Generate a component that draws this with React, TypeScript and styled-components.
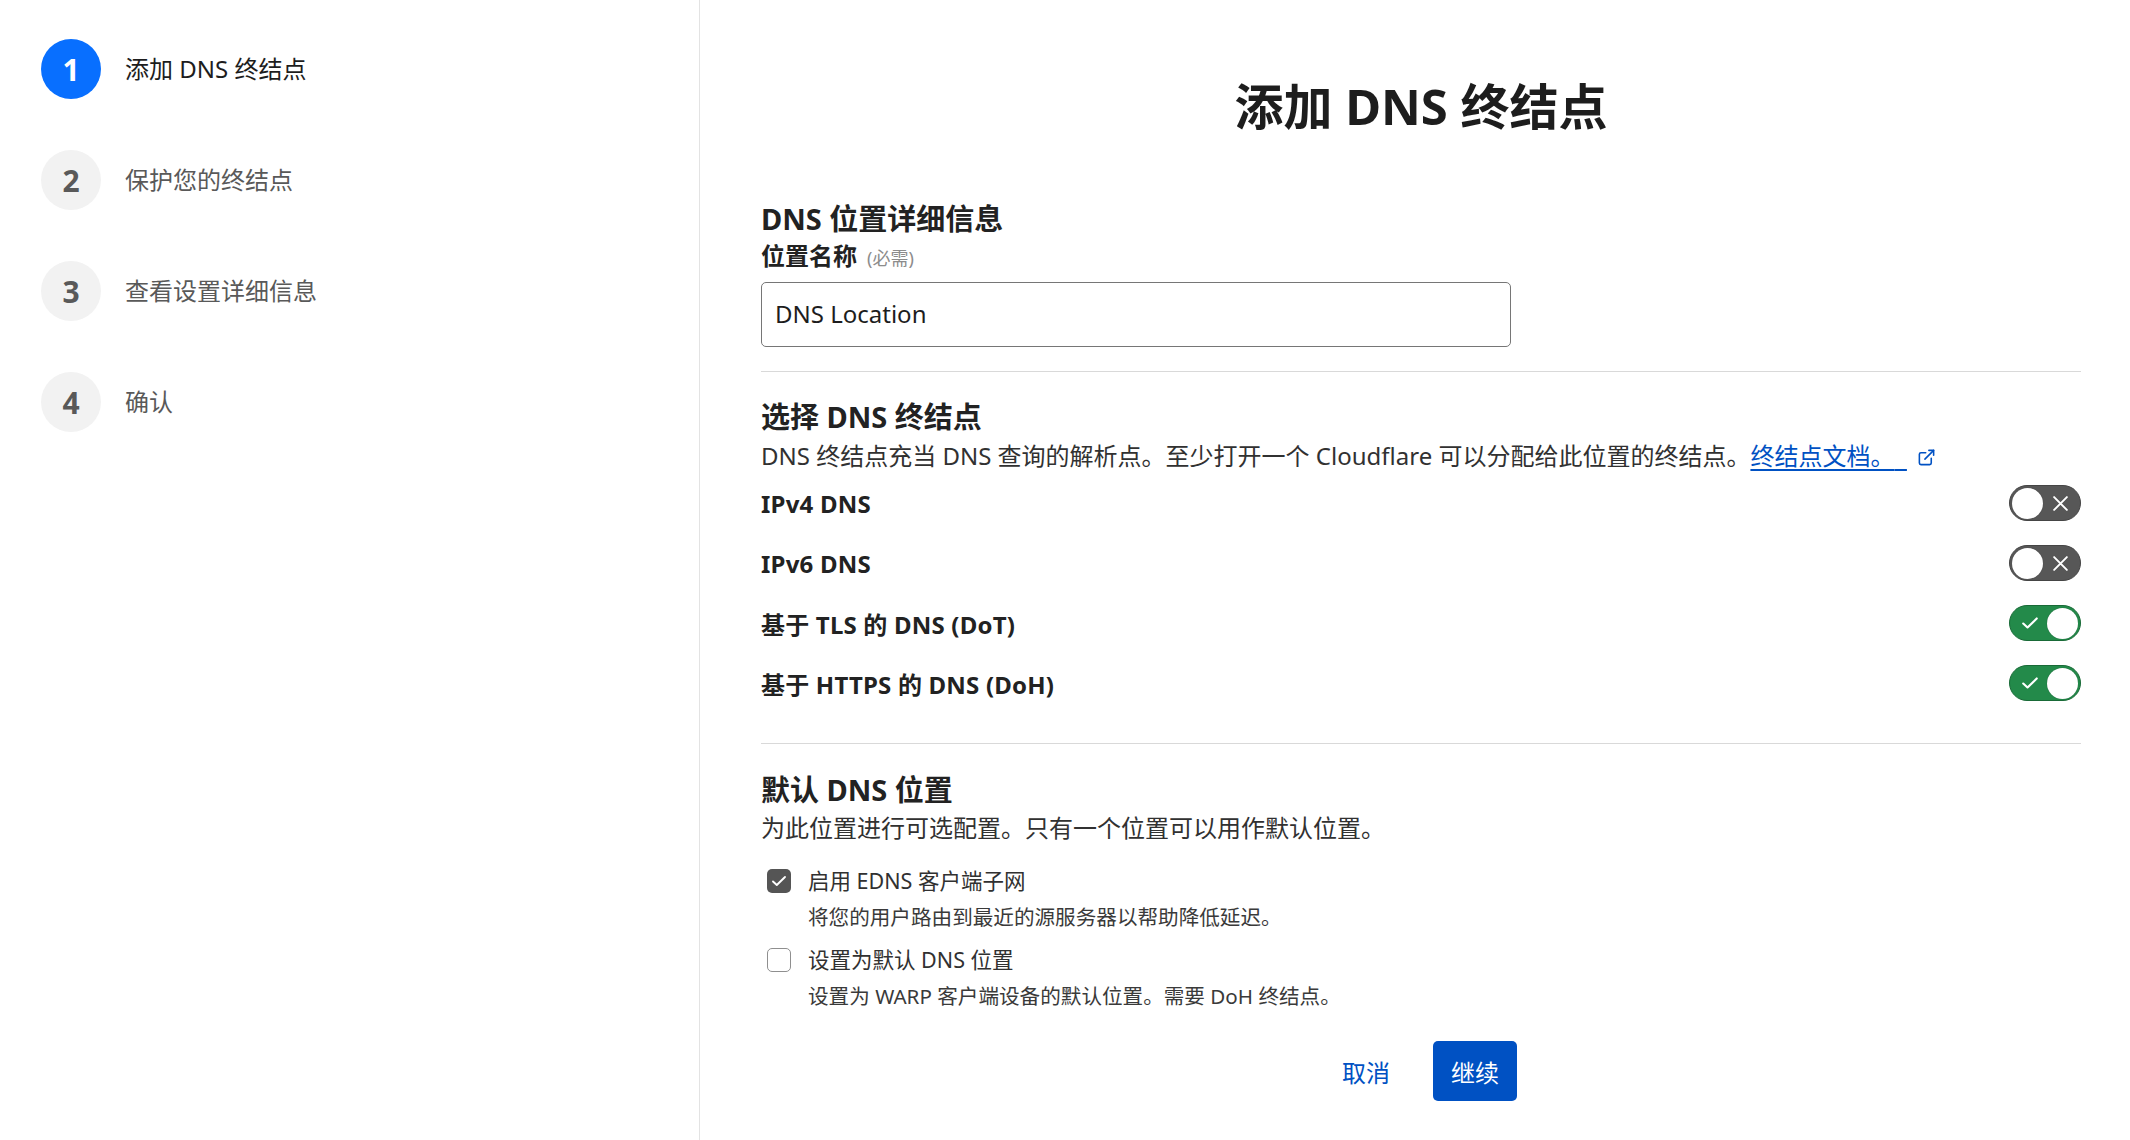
import React from "react";
import styled, { createGlobalStyle } from "styled-components";

const GlobalStyle = createGlobalStyle`
  html, body {
    margin: 0;
    padding: 0;
    background: #ffffff;
  }
  body {
    font-family: "Noto Sans", "Noto Sans CJK SC", sans-serif;
    color: #222222;
  }
  * { box-sizing: border-box; }
`;

const Page = styled.div`
  display: grid;
  grid-template-columns: 700px 1fr;
  height: 1140px;
  overflow: hidden;
`;

const Sidebar = styled.aside`
  border-right: 1px solid #e3e3e3;
  padding: 39px 0 0 41px;
  display: flex;
  flex-direction: column;
  gap: 51px;
`;

const Step = styled.div`
  display: flex;
  align-items: center;
  gap: 24px;
`;

const StepCircle = styled.div<{ $active?: boolean }>`
  width: 60px;
  height: 60px;
  border-radius: 50%;
  display: flex;
  align-items: center;
  justify-content: center;
  font-size: 30px;
  font-weight: 700;
  background: ${(p) => (p.$active ? "#086fff" : "#f2f2f2")};
  color: ${(p) => (p.$active ? "#ffffff" : "#595959")};
`;

const StepLabel = styled.span<{ $active?: boolean }>`
  font-size: 24px;
  padding-bottom: 4px;
  color: ${(p) => (p.$active ? "#1d1d1d" : "#595959")};
`;

const Main = styled.main`
  padding: 77px 49px 0 61px;
  display: flex;
  flex-direction: column;
`;

const Title = styled.h1`
  margin: 0;
  font-size: 49px;
  line-height: 58px;
  font-weight: 700;
  text-align: center;
  color: #1d1d1d;
`;

const SectionHeading = styled.h2<{ $top: number }>`
  margin: ${(p) => p.$top}px 0 0;
  font-size: 29px;
  line-height: 36px;
  font-weight: 700;
  color: #222222;
`;

const FieldLabel = styled.label`
  margin-top: 4px;
  display: flex;
  align-items: baseline;
  gap: 10px;
  font-size: 24px;
  line-height: 30px;
  font-weight: 700;
  color: #222222;
`;

const Required = styled.span`
  font-size: 18px;
  font-weight: 400;
  color: #8c8c8c;
`;

const TextInput = styled.input`
  margin-top: 9px;
  width: 750px;
  height: 65px;
  border: 1px solid #767676;
  border-radius: 5px;
  padding: 0 13px 2px;
  font-family: inherit;
  font-size: 24px;
  color: #1d1d1d;
  outline: none;
`;

const Divider = styled.hr<{ $top: number }>`
  margin: ${(p) => p.$top}px 0 0;
  border: 0;
  border-top: 1px solid #d9d9d9;
  height: 0;
`;

const Description = styled.p<{ $top: number }>`
  margin: ${(p) => p.$top}px 0 0;
  font-size: 24px;
  line-height: 34px;
  color: #313131;
`;

const DocLink = styled.a`
  color: #0051c3;
  text-decoration: underline;
  text-underline-offset: 4px;
`;

const LinkIcon = styled.svg`
  width: 19px;
  height: 19px;
  margin-left: 10px;
  vertical-align: -2px;
  stroke: #0051c3;
`;

const ToggleList = styled.div`
  display: flex;
  flex-direction: column;
`;

const ToggleRow = styled.div`
  height: 60px;
  display: flex;
  align-items: center;
  justify-content: space-between;
`;

const ToggleLabel = styled.span`
  font-size: 24px;
  font-weight: 700;
  letter-spacing: 0.2px;
  color: #222222;
`;

const Switch = styled.button<{ $on: boolean }>`
  width: 72px;
  height: 36px;
  border-radius: 18px;
  padding: 2px;
  display: flex;
  flex-direction: ${(p) => (p.$on ? "row-reverse" : "row")};
  align-items: center;
  cursor: pointer;
  background: ${(p) => (p.$on ? "#238a4a" : "#575757")};
  border: 1px solid ${(p) => (p.$on ? "#196a37" : "#454545")};
`;

const Knob = styled.span`
  width: 31px;
  height: 31px;
  border-radius: 50%;
  background: #ffffff;
  box-shadow: 0 0 1px rgba(0, 0, 0, 0.35);
  flex: none;
`;

const SwitchIcon = styled.span`
  flex: 1;
  display: flex;
  align-items: center;
  justify-content: center;
`;

const CheckList = styled.div`
  margin-top: 20px;
  display: flex;
  flex-direction: column;
  gap: 12px;
`;

const CheckItem = styled.div`
  display: grid;
  grid-template-columns: 24px 1fr;
  column-gap: 17px;
  row-gap: 5px;
  padding-left: 6px;
  align-items: center;
`;

const CheckBox = styled.span<{ $checked: boolean }>`
  width: 24px;
  height: 24px;
  border-radius: 5px;
  display: flex;
  align-items: center;
  justify-content: center;
  background: ${(p) => (p.$checked ? "#555555" : "#ffffff")};
  border: ${(p) => (p.$checked ? "none" : "1.5px solid #8f8f8f")};
`;

const CheckLabel = styled.span`
  font-size: 21.5px;
  line-height: 32px;
  color: #313131;
`;

const CheckHint = styled.span`
  grid-column: 2;
  font-size: 20.6px;
  line-height: 30px;
  color: #3a3a3a;
`;

const Footer = styled.div`
  margin-top: 30px;
  width: 756px;
  display: flex;
  justify-content: flex-end;
  gap: 25px;
`;

const Button = styled.button<{ $primary?: boolean }>`
  height: 60px;
  padding: 0 18px;
  border-radius: 5px;
  border: none;
  font-family: inherit;
  font-size: 24px;
  cursor: pointer;
  background: ${(p) => (p.$primary ? "#0051c3" : "transparent")};
  color: ${(p) => (p.$primary ? "#ffffff" : "#0051c3")};
`;

const steps = ["添加 DNS 终结点", "保护您的终结点", "查看设置详细信息", "确认"];

const endpoints = [
  { label: "IPv4 DNS", on: false },
  { label: "IPv6 DNS", on: false },
  { label: "基于 TLS 的 DNS (DoT)", on: true },
  { label: "基于 HTTPS 的 DNS (DoH)", on: true },
];

const XIcon = () => (
  <svg width="17" height="17" viewBox="0 0 16 16" fill="none" stroke="#ffffff" strokeWidth="1.8" strokeLinecap="round">
    <path d="M2 2l12 12M14 2L2 14" />
  </svg>
);

const CheckIcon = ({ size = 18 }: { size?: number }) => (
  <svg width={size} height={size} viewBox="0 0 16 16" fill="none" stroke="#ffffff" strokeWidth="1.9" strokeLinecap="round" strokeLinejoin="round">
    <path d="M2 8.5l3.8 3.5L14 4" />
  </svg>
);

export default function App() {
  return (
    <>
      <GlobalStyle />
      <Page>
        <Sidebar>
          {steps.map((s, i) => (
            <Step key={s}>
              <StepCircle $active={i === 0}>{i + 1}</StepCircle>
              <StepLabel $active={i === 0}>{s}</StepLabel>
            </Step>
          ))}
        </Sidebar>
        <Main>
          <Title>添加 DNS 终结点</Title>

          <SectionHeading $top={66}>DNS 位置详细信息</SectionHeading>
          <FieldLabel>
            位置名称<Required>(必需)</Required>
          </FieldLabel>
          <TextInput defaultValue="DNS Location" />

          <Divider $top={24} />

          <SectionHeading $top={27}>选择 DNS 终结点</SectionHeading>
          <Description $top={4}>
            DNS 终结点充当 DNS 查询的解析点。至少打开一个 Cloudflare 可以分配给此位置的终结点。
            <DocLink href="#">终结点文档。{"\u00a0\u00a0"}</DocLink>
            <LinkIcon viewBox="0 0 24 24" fill="none" strokeWidth="2" strokeLinecap="round" strokeLinejoin="round">
              <path d="M15 3h6v6" />
              <path d="M10 14 21 3" />
              <path d="M18 13v6a2 2 0 0 1-2 2H5a2 2 0 0 1-2-2V8a2 2 0 0 1 2-2h6" />
            </LinkIcon>
          </Description>

          <ToggleList>
            {endpoints.map((e) => (
              <ToggleRow key={e.label}>
                <ToggleLabel>{e.label}</ToggleLabel>
                <Switch $on={e.on} aria-pressed={e.on}>
                  <Knob />
                  <SwitchIcon>{e.on ? <CheckIcon /> : <XIcon />}</SwitchIcon>
                </Switch>
              </ToggleRow>
            ))}
          </ToggleList>

          <Divider $top={30} />

          <SectionHeading $top={28}>默认 DNS 位置</SectionHeading>
          <Description $top={3}>为此位置进行可选配置。只有一个位置可以用作默认位置。</Description>

          <CheckList>
            <CheckItem>
              <CheckBox $checked>
                <CheckIcon size={16} />
              </CheckBox>
              <CheckLabel>启用 EDNS 客户端子网</CheckLabel>
              <CheckHint>将您的用户路由到最近的源服务器以帮助降低延迟。</CheckHint>
            </CheckItem>
            <CheckItem>
              <CheckBox $checked={false} />
              <CheckLabel>设置为默认 DNS 位置</CheckLabel>
              <CheckHint>设置为 WARP 客户端设备的默认位置。需要 DoH 终结点。</CheckHint>
            </CheckItem>
          </CheckList>

          <Footer>
            <Button>取消</Button>
            <Button $primary>继续</Button>
          </Footer>
        </Main>
      </Page>
    </>
  );
}
